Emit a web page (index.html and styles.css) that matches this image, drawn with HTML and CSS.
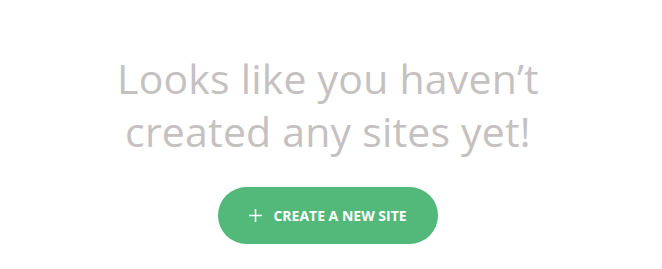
FILE: index.html
```html
<!DOCTYPE html>
<html>
<head>
<meta charset="utf-8">
<link rel="stylesheet" href="styles.css">
</head>
<body>
<main class="empty">
  <h1 class="empty-title">Looks like you haven’t<br>created any sites yet!</h1>
  <button class="create-btn">
    <svg class="plus" width="13" height="13" viewBox="0 0 13 13"><path d="M6.5 0V13M0 6.5H13" stroke="#fff" stroke-width="1.6" fill="none"/></svg>
    <span>CREATE A NEW SITE</span>
  </button>
</main>
</body>
</html>
```
FILE: styles.css
```css
html, body {
  margin: 0;
  background: #fff;
}
.empty {
  display: flex;
  flex-direction: column;
  align-items: center;
  padding-top: 52px;
  padding-right: 6px;
}
.empty-title {
  margin: 0;
  font-family: "Open Sans", sans-serif;
  font-weight: 400;
  font-size: 41px;
  line-height: 53px;
  letter-spacing: 0.2px;
  color: #c5c1c1;
  text-align: center;
}
.create-btn {
  margin-top: 29px;
  width: 220px;
  height: 57px;
  border: none;
  border-radius: 29px;
  background: #52b97a;
  color: #fff;
  display: flex;
  align-items: center;
  justify-content: center;
  gap: 11px;
  font-family: "Open Sans", sans-serif;
  font-weight: 700;
  font-size: 14px;
  padding: 0;
}
.plus { display: block; }
```
